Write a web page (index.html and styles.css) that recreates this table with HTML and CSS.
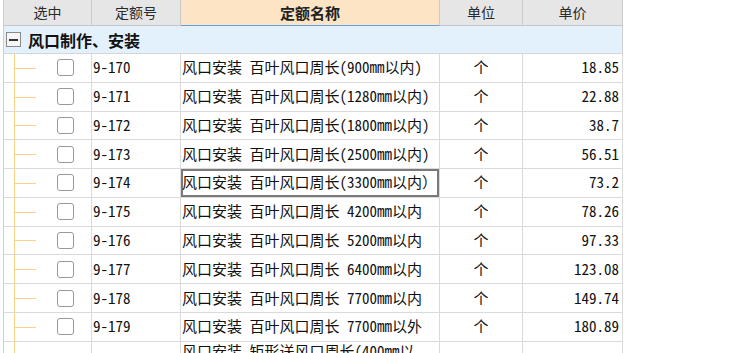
FILE: index.html
```html
<!DOCTYPE html>
<html lang="zh-CN">
<head>
<meta charset="utf-8">
<title>定额</title>
<link rel="stylesheet" href="styles.css">
</head>
<body>
<div class="grid">
  <div class="row head">
    <div class="hcell">选中</div>
    <div class="hcell">定额号</div>
    <div class="hcell sel">定额名称</div>
    <div class="hcell">单位</div>
    <div class="hcell">单价</div>
  </div>
  <div class="group">
    <span class="toggle"></span>
    <span class="gtitle">风口制作、安装</span>
  </div>
  <div class="row">
    <div class="cell c1"><span class="tree"></span><span class="chk"></span></div>
    <div class="cell c2">9-170</div>
    <div class="cell c3">风口安装 百叶风口周长(900mm以内)</div>
    <div class="cell c4">个</div>
    <div class="cell c5">18.85</div>
  </div>
  <div class="row">
    <div class="cell c1"><span class="tree"></span><span class="chk"></span></div>
    <div class="cell c2">9-171</div>
    <div class="cell c3">风口安装 百叶风口周长(1280mm以内)</div>
    <div class="cell c4">个</div>
    <div class="cell c5">22.88</div>
  </div>
  <div class="row">
    <div class="cell c1"><span class="tree"></span><span class="chk"></span></div>
    <div class="cell c2">9-172</div>
    <div class="cell c3">风口安装 百叶风口周长(1800mm以内)</div>
    <div class="cell c4">个</div>
    <div class="cell c5">38.7</div>
  </div>
  <div class="row">
    <div class="cell c1"><span class="tree"></span><span class="chk"></span></div>
    <div class="cell c2">9-173</div>
    <div class="cell c3">风口安装 百叶风口周长(2500mm以内)</div>
    <div class="cell c4">个</div>
    <div class="cell c5">56.51</div>
  </div>
  <div class="row">
    <div class="cell c1"><span class="tree"></span><span class="chk"></span></div>
    <div class="cell c2">9-174</div>
    <div class="cell c3 focus">风口安装 百叶风口周长(3300mm以内）</div>
    <div class="cell c4">个</div>
    <div class="cell c5">73.2</div>
  </div>
  <div class="row">
    <div class="cell c1"><span class="tree"></span><span class="chk"></span></div>
    <div class="cell c2">9-175</div>
    <div class="cell c3">风口安装 百叶风口周长 4200mm以内</div>
    <div class="cell c4">个</div>
    <div class="cell c5">78.26</div>
  </div>
  <div class="row">
    <div class="cell c1"><span class="tree"></span><span class="chk"></span></div>
    <div class="cell c2">9-176</div>
    <div class="cell c3">风口安装 百叶风口周长 5200mm以内</div>
    <div class="cell c4">个</div>
    <div class="cell c5">97.33</div>
  </div>
  <div class="row">
    <div class="cell c1"><span class="tree"></span><span class="chk"></span></div>
    <div class="cell c2">9-177</div>
    <div class="cell c3">风口安装 百叶风口周长 6400mm以内</div>
    <div class="cell c4">个</div>
    <div class="cell c5">123.08</div>
  </div>
  <div class="row">
    <div class="cell c1"><span class="tree"></span><span class="chk"></span></div>
    <div class="cell c2">9-178</div>
    <div class="cell c3">风口安装 百叶风口周长 7700mm以内</div>
    <div class="cell c4">个</div>
    <div class="cell c5">149.74</div>
  </div>
  <div class="row">
    <div class="cell c1"><span class="tree"></span><span class="chk"></span></div>
    <div class="cell c2">9-179</div>
    <div class="cell c3">风口安装 百叶风口周长 7700mm以外</div>
    <div class="cell c4">个</div>
    <div class="cell c5">180.89</div>
  </div>
  <div class="row tall">
    <div class="cell c1"><span class="tree"></span><span class="chk"></span></div>
    <div class="cell c2">9-180</div>
    <div class="cell c3 top">风口安装 矩形送风口周长(400mm以内）</div>
    <div class="cell c4">个</div>
    <div class="cell c5">25.61</div>
  </div>
</div>
</body>
</html>
```
FILE: styles.css
```css
html, body {
  margin: 0;
  padding: 0;
  background: #ffffff;
}

body {
  font-family: "Noto Sans Mono CJK SC", "Noto Sans CJK SC", monospace;
  color: #111111;
  overflow: hidden;
}

.grid {
  margin-left: 3px;
  width: 619px;
  border-left: 1px solid #cfcfcf;
}

.row {
  display: grid;
  grid-template-columns: 88px 89px 259px 83px 100px;
  height: 28.78px;
}

.row.head {
  height: 26px;
}

.row.tall {
  height: 90px;
}

.hcell {
  box-sizing: border-box;
  background: #e6e6e6;
  border-right: 1px solid #cbcbcb;
  border-bottom: 1px solid #c6c6c6;
  display: flex;
  align-items: center;
  justify-content: center;
  font-family: "Noto Sans CJK SC", sans-serif;
  font-size: 14px;
  color: #2a2a2a;
  padding-bottom: 1px;
}

.hcell.sel {
  background: #fde4c5;
  border-bottom: 1px solid #64a0e0;
  font-weight: bold;
  font-size: 15px;
  color: #222222;
}

.group {
  box-sizing: border-box;
  height: 28px;
  background: #e3f1fd;
  border-bottom: 1px solid #d6d6d6;
  border-right: 1px solid #d0d0d0;
  display: flex;
  align-items: center;
  padding-left: 2px;
}

.toggle {
  box-sizing: border-box;
  width: 15px;
  height: 15px;
  border: 1px solid #8a8a8a;
  background: #f7f7f7;
  display: flex;
  align-items: center;
  justify-content: center;
}

.toggle::before {
  content: "";
  width: 9px;
  height: 2px;
  background: #333333;
}

.gtitle {
  margin-left: 7px;
  font-family: "Noto Sans CJK SC", sans-serif;
  font-weight: bold;
  font-size: 16px;
  color: #111111;
}

.cell {
  box-sizing: border-box;
  border-right: 1px solid #dadada;
  border-bottom: 1px solid #dadada;
  display: flex;
  align-items: center;
  padding-bottom: 2px;
  font-size: 15px;
  white-space: nowrap;
  overflow: hidden;
}

.c1 {
  padding-left: 10px;
  padding-bottom: 0;
}

.tree {
  align-self: stretch;
  width: 21px;
  border-left: 1px solid #ffd08a;
  display: flex;
  align-items: center;
  margin-bottom: -1px;
}

.tree::before {
  content: "";
  flex: 1;
  height: 1px;
  background: #ffd08a;
}

.chk {
  box-sizing: border-box;
  flex-shrink: 0;
  width: 17px;
  height: 17px;
  margin-left: 21px;
  border: 1px solid #999999;
  border-radius: 3px;
  background: #ffffff;
}

.c2, .c3 {
  padding-left: 1px;
}

.c4 {
  justify-content: center;
}

.c5 {
  justify-content: flex-end;
  padding-right: 3px;
}

.focus {
  box-shadow: inset 0 0 0 2px #7a7a7a;
}

.top {
  align-items: flex-start;
  white-space: normal;
  line-height: 17px;
  padding-right: 16px;
}
```
